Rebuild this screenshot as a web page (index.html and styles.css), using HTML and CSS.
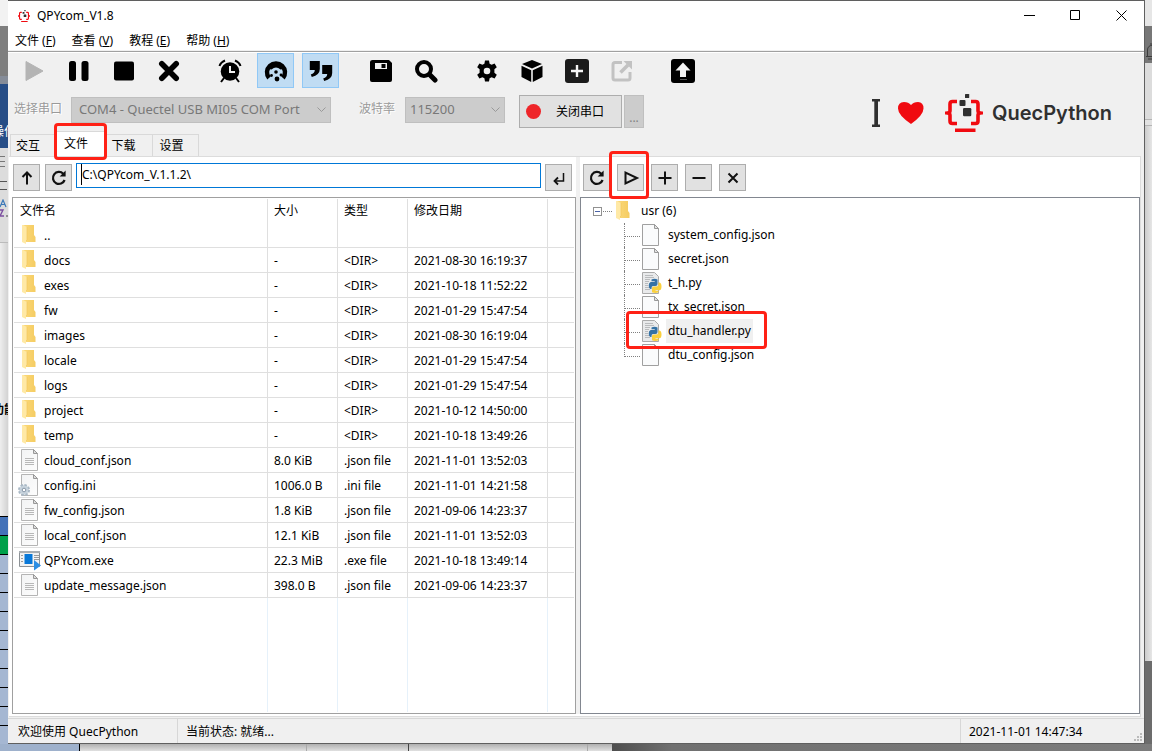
FILE: index.html
```html
<!DOCTYPE html>
<html lang="zh-CN">
<head>
<meta charset="utf-8">
<title>QPYcom_V1.8</title>
<link rel="stylesheet" href="styles.css">
</head>
<body>
<svg class="defs" width="0" height="0" aria-hidden="true">
  <defs>
    <linearGradient id="fold" x1="0" x2="1"><stop offset="0" stop-color="#fbd97a"/><stop offset="1" stop-color="#f5cc62"/></linearGradient>
    <linearGradient id="paper" x1="0" y1="0" x2="1" y2="1"><stop offset="0" stop-color="#f2f3f4"/><stop offset="1" stop-color="#fdfdfd"/></linearGradient>
    <symbol id="folder" viewBox="0 0 24 22"><path d="M5 1h11v10l1.500 2v5H6z" fill="url(#fold)"/><path d="M4 1h1l4 2v13l-1 1v3l-4-2z" fill="#ffe9a6"/><path d="M9 3v13l-1 1" fill="none" stroke="#f0c455" stroke-width=".6"/></symbol>
    <symbol id="doc" viewBox="0 0 24 22"><path d="M3.500.5h12l4 4v17h-16z" fill="url(#paper)" stroke="#b4b4b4"/><path d="M15.500.5v4h4z" fill="#ddd" stroke="#999"/><path d="M7 9.500h9M7 11.500h9M7 13.500h9M7 15.500h9" stroke="#b8b8b8"/></symbol>
    <symbol id="ini" viewBox="0 0 24 22"><path d="M3.500.5h12l4 4v17h-16z" fill="url(#paper)" stroke="#b4b4b4"/><path d="M15.500.5v4h4z" fill="#ddd" stroke="#999"/><circle cx="6" cy="16" r="5" fill="#d3dce4" stroke="#a9b8c5" stroke-width="2" stroke-dasharray="2.400 1.500"/><circle cx="6" cy="16" r="4.200" fill="#c6d2dc"/><circle cx="6" cy="16" r="1.800" fill="#fff" stroke="#8898a8"/></symbol>
    <symbol id="exe" viewBox="0 0 24 22"><path d="M1.500 2.500h20v15h-20z" fill="#ececec" stroke="#8d9296"/><path d="M1 2h21v2H1z" fill="#a9aeb2"/><path d="M2 4.500h19v12H2z" fill="#f3f3f3"/><path d="M3 6.500h2M3 9.500h2M3 12.500h2M16 6.500h5M16 8.500h5M16 10.500h5" stroke="#9b9b9b"/><path d="M6.500 5h8v10h-8z" fill="#0878d8"/><path d="M16 11l7 5.500-7 5z" fill="#2d8fe4"/></symbol>
    <symbol id="blank" viewBox="0 0 20 22"><path d="M.5.5h12l4 4v17H.5z" fill="#fafbfc" stroke="#a0a0a0"/><path d="M12.500.5v4h4z" fill="#e4e4e4" stroke="#999"/></symbol>
    <symbol id="py" viewBox="0 0 20 22"><path d="M.5.5h12l4 4v17H.5z" fill="#e9eaeb" stroke="#aaa"/><path d="M3 3.500h8M3 5.500h9M3 7.500h5M3 9.500h4M3 11.500h3M3 13.500h3M3 15.500h4M3 17.500h5" stroke="#b9bbbd"/><path d="M9.500 7.500q3-1.500 6 0V12q0 2-2 2h-2.500q-1.500 0-1.500 2v1H8.500q-1.800-.5-1.800-3.500t2-3.500h4v-.8H9.500z" fill="#3572a5"/><path d="M16.500 10.500h1q2 .5 2 4t-2 3.700h-4v.8h3v1.200q-3 1.600-6.500 0V16q0-1.500 1.800-1.500H14.500q2 0 2-2z" fill="#fad03d"/></symbol>
    <symbol id="refresh" viewBox="0 0 18 18"><path d="M14.600 11a6 6 0 1 1-1.400-6.300" fill="none" stroke="#111" stroke-width="2.200"/><path d="M15.600 1.600v6h-6z" fill="#111"/></symbol>
    <symbol id="brand" viewBox="0 0 38 38"><path d="M12 7.500H7.500Q5 7.500 5 10v6.500q0 2-1.500 2.500Q5 19.500 5 21.500V27q0 2.500 2.500 2.500H12M26 7.500h4.500Q33 7.500 33 10v6.500q0 2 1.500 2.500-1.500.5-1.500 2.500V27q0 2.500-2.500 2.500H26" fill="none" stroke="#f00a10" stroke-width="3.600"/><path d="M0 17.600h4v2.800H0zM34 17.600h4v2.800h-4zM10 34.600h20.500V38H10z" fill="#f00a10"/><rect x="20" y="0" width="4.200" height="4" rx=".6" fill="#303030"/><rect x="14.500" y="6" width="6" height="6" rx="1" fill="#303030"/><rect x="18" y="14" width="8.300" height="8.300" rx="1.200" fill="#303030"/></symbol>
  </defs>
</svg>
<div class="desktop">
  <aside class="edge-left" aria-hidden="true">
    <i class="l-top"></i><i class="l-gray"></i><i class="l-haze"></i><i class="l-blue">操作</i><i class="l-lines"></i><i class="l-sort"><svg width="8" height="20"><path d="M0 8L3 1l3 7M1 5.500h4" fill="none" stroke="#3b78b8" stroke-width="1.200"/><path d="M0 11h3l-3 6h4" fill="none" stroke="#7b4ea0" stroke-width="1.400"/><path d="M7 16v2" stroke="#444"/></svg></i><i class="l-page">功能</i><i class="l-cellblue"></i><i class="l-green"></i><i class="l-rows"></i>
  </aside>

  <main class="window">
    <header class="titlebar">
      <svg class="title-icon" viewBox="0 0 38 38"><use href="#brand"/></svg>
      <h1 class="title">QPYcom_V1.8</h1>
      <button class="win-btn" aria-label="最小化"><svg width="11" height="11"><path d="M0 5.500h11" stroke="#000"/></svg></button>
      <button class="win-btn" aria-label="最大化"><svg width="11" height="11"><path d="M.5.5h9v9h-9z" fill="none" stroke="#000"/></svg></button>
      <button class="win-btn" aria-label="关闭"><svg width="11" height="11"><path d="M.5.5l10 10M10.500.5l-10 10" stroke="#000"/></svg></button>
    </header>
    <nav class="menubar">
      <button class="menu">文件 (<u>F</u>)</button><button class="menu">查看 (<u>V</u>)</button><button class="menu">教程 (<u>E</u>)</button><button class="menu">帮助 (<u>H</u>)</button>
    </nav>

    <section class="tools">
      <div class="tools-main">
        <div class="toolbar">
          <div class="group">
            <button class="tool" aria-label="运行" disabled><svg viewBox="0 0 24 24"><path d="M4 2.500L21 12 4 21.500z" fill="#b4b4b4" stroke="#b4b4b4" stroke-linejoin="round"/></svg></button>
            <button class="tool" aria-label="暂停"><svg viewBox="0 0 24 24"><rect x="2" y="2" width="7" height="20" rx="2.500"/><rect x="14.500" y="2" width="7" height="20" rx="2.500"/></svg></button>
            <button class="tool" aria-label="停止"><svg viewBox="0 0 24 24"><rect x="2" y="2.500" width="20" height="19" rx="2"/></svg></button>
            <button class="tool" aria-label="清除"><svg viewBox="0 0 24 24"><path d="M4.800 4.800l14.400 14.400M19.200 4.800L4.800 19.200" stroke="#000" stroke-width="5.600" stroke-linecap="round"/></svg></button>
          </div>
          <div class="group">
            <button class="tool" aria-label="定时"><svg viewBox="0 0 24 24"><circle cx="12" cy="12.500" r="9.300"/><path d="M12 7v6h5" fill="none" stroke="#f0f0f0" stroke-width="2"/><path d="M1.500 7q1-3.500 5.500-5.500M22.500 7q-1-3.500-5.500-5.500M6 19l-3 4M18 19l3 4" fill="none" stroke="#000" stroke-width="2"/></svg></button>
            <button class="tool on" aria-label="日志" aria-pressed="true"><svg viewBox="0 0 24 24"><path d="M5 19A9 9 0 1 1 19 19" fill="none" stroke="#000" stroke-width="4.400"/><path d="M3.500 10Q12 1 20.500 10l-4 .5Q12 6.500 7.500 10.500z"/><circle cx="12" cy="13" r="1.800"/><circle cx="13" cy="20" r="2.400"/><circle cx="7.500" cy="16.500" r="1.400"/><circle cx="17" cy="16" r="1.400"/></svg></button>
            <button class="tool on" aria-label="引用" aria-pressed="true"><svg viewBox="0 0 24 24"><path d="M.8 2h10v8q0 6-8 8l-1-2.500q4-1.500 4-4.500H.8zM13.200 6h10v8q0 6-8 8l-1-2.500q4-1.500 4-4.500h-5z"/></svg></button>
          </div>
          <div class="group">
            <button class="tool" aria-label="保存"><svg viewBox="0 0 24 24"><path d="M3.500 1H20l3 3v17q0 2-2 2H3q-2 0-2-2V3q0-2 2.500-2z"/><path d="M6 4h12v6H6z" fill="#f0f0f0"/><path d="M12.500 5h4v4h-4z"/></svg></button>
            <button class="tool" aria-label="搜索"><svg viewBox="0 0 24 24"><circle cx="10" cy="10" r="7" fill="none" stroke="#000" stroke-width="4"/><path d="M16 16l5 5" stroke="#000" stroke-width="5" stroke-linecap="round"/></svg></button>
          </div>
          <div class="group">
            <button class="tool" aria-label="设置"><svg viewBox="0 0 24 24"><path d="M10 1.500h4l.6 3.200 2 1.100 3-1.200 2.200 3.700-2.400 2v3.400l2.400 2-2.200 3.700-3-1.200-2 1.100-.6 3.200h-4l-.6-3.200-2-1.100-3 1.200-2.200-3.700 2.400-2v-3.400l-2.400-2 2.200-3.700 3 1.200 2-1.100z"/><circle cx="12" cy="12" r="3.300" fill="#f0f0f0"/></svg></button>
            <button class="tool" aria-label="打包"><svg viewBox="0 0 24 24"><path d="M12 1l10 4-10 4.500L2 5zM1.500 6.800l9.700 4.400V23L1.500 18zM22.500 6.800l-9.700 4.400V23l9.700-5z"/></svg></button>
            <button class="tool" aria-label="新建"><svg viewBox="0 0 24 24"><rect width="24" height="24" rx="3" fill="#1b1b1b"/><path d="M12 6v12M6 12h12" stroke="#f4f4f4" stroke-width="2.400"/></svg></button>
            <button class="tool" aria-label="导出" disabled><svg viewBox="0 0 24 24"><path d="M12 3.500H5q-2 0-2 2V19q0 2 2 2h13q2 0 2-2v-6" fill="none" stroke="#c2c2c2" stroke-width="3"/><path d="M10.500 13.500L18 6" stroke="#c2c2c2" stroke-width="3.500"/><path d="M13.500 2H22v8.500z" fill="#c2c2c2"/></svg></button>
          </div>
          <div class="group">
            <button class="tool" aria-label="上传"><svg viewBox="0 0 24 24"><rect width="24" height="24" rx="3"/><path d="M12 3.500l7.500 8H15V18H9v-6.500H4.500z" fill="#f4f4f4"/><path d="M9 20.500h7" stroke="#555"/></svg></button>
          </div>
        </div>
        <div class="serial">
          <label class="serial-label" for="port">选择串口</label>
          <span class="combo combo-port"><select id="port" disabled><option>COM4 - Quectel USB MI05 COM Port</option></select><svg width="9" height="6"><path d="M.5.5l4 4 4-4" fill="none" stroke="#999"/></svg></span>
          <label class="serial-label baud-label" for="baud">波特率</label>
          <span class="combo combo-baud"><select id="baud" disabled><option>115200</option></select><svg width="9" height="6"><path d="M.5.5l4 4 4-4" fill="none" stroke="#999"/></svg></span>
          <button class="close-port"><i class="dot"></i><span>关闭串口</span></button>
          <button class="more" disabled>...</button>
        </div>
        <div class="tabs" role="tablist">
          <button class="tab" role="tab">交互</button><button class="tab active marked" role="tab" aria-selected="true">文件</button><button class="tab" role="tab">下载</button><button class="tab" role="tab">设置</button>
        </div>
      </div>
      <div class="brand">
        <svg width="52" height="28" viewBox="0 0 52 28"><path d="M0 0h8v2.500H6v23h2V28H0v-2.500h2.300v-23H0z" fill="#303030"/><path d="M39 25Q26 16 26 9.500 26 3 32 3q4.500 0 7 3 2.500-3 7-3 5.500 0 5.500 6.500T39 25z" fill="#f00a10"/></svg>
        <svg class="brand-mark" viewBox="0 0 38 38"><use href="#brand"/></svg>
        <span class="brand-name">QuecPython</span>
      </div>
    </section>

    <div class="panes">
      <section class="pane local">
        <div class="pane-bar">
          <button class="small" aria-label="上级目录"><svg viewBox="0 0 18 18"><path d="M9 15.500V4M4.500 8L9 3.500 13.500 8" fill="none" stroke="#111" stroke-width="2"/></svg></button>
          <button class="small" aria-label="刷新"><svg viewBox="0 0 18 18"><use href="#refresh"/></svg></button>
          <span class="path-box"><input class="path" type="text" value="C:\QPYcom_V.1.1.2\" aria-label="路径"></span>
          <button class="small" aria-label="转到"><svg viewBox="0 0 18 18"><path d="M13.500 4v8H5" fill="none" stroke="#111" stroke-width="1.500"/><path d="M8 8.500L4.500 12 8 15.500" fill="none" stroke="#111" stroke-width="1.800"/></svg></button>
        </div>
        <div class="list">
          <table class="files">
            <colgroup><col class="c-name"><col class="c-size"><col class="c-type"><col class="c-date"><col></colgroup>
            <thead><tr><th>文件名</th><th>大小</th><th>类型</th><th>修改日期</th><th></th></tr></thead>
            <tbody>
              <tr><td><svg><use href="#folder"/></svg>..</td><td></td><td></td><td></td><td></td></tr>
              <tr><td><svg><use href="#folder"/></svg>docs</td><td>-</td><td>&lt;DIR&gt;</td><td>2021-08-30 16:19:37</td><td></td></tr>
              <tr><td><svg><use href="#folder"/></svg>exes</td><td>-</td><td>&lt;DIR&gt;</td><td>2021-10-18 11:52:22</td><td></td></tr>
              <tr><td><svg><use href="#folder"/></svg>fw</td><td>-</td><td>&lt;DIR&gt;</td><td>2021-01-29 15:47:54</td><td></td></tr>
              <tr><td><svg><use href="#folder"/></svg>images</td><td>-</td><td>&lt;DIR&gt;</td><td>2021-08-30 16:19:04</td><td></td></tr>
              <tr><td><svg><use href="#folder"/></svg>locale</td><td>-</td><td>&lt;DIR&gt;</td><td>2021-01-29 15:47:54</td><td></td></tr>
              <tr><td><svg><use href="#folder"/></svg>logs</td><td>-</td><td>&lt;DIR&gt;</td><td>2021-01-29 15:47:54</td><td></td></tr>
              <tr><td><svg><use href="#folder"/></svg>project</td><td>-</td><td>&lt;DIR&gt;</td><td>2021-10-12 14:50:00</td><td></td></tr>
              <tr><td><svg><use href="#folder"/></svg>temp</td><td>-</td><td>&lt;DIR&gt;</td><td>2021-10-18 13:49:26</td><td></td></tr>
              <tr><td><svg><use href="#doc"/></svg>cloud_conf.json</td><td>8.0 KiB</td><td>.json file</td><td>2021-11-01 13:52:03</td><td></td></tr>
              <tr><td><svg><use href="#ini"/></svg>config.ini</td><td>1006.0 B</td><td>.ini file</td><td>2021-11-01 14:21:58</td><td></td></tr>
              <tr><td><svg><use href="#doc"/></svg>fw_config.json</td><td>1.8 KiB</td><td>.json file</td><td>2021-09-06 14:23:37</td><td></td></tr>
              <tr><td><svg><use href="#doc"/></svg>local_conf.json</td><td>12.1 KiB</td><td>.json file</td><td>2021-11-01 13:52:03</td><td></td></tr>
              <tr><td><svg><use href="#exe"/></svg>QPYcom.exe</td><td>22.3 MiB</td><td>.exe file</td><td>2021-10-18 13:49:14</td><td></td></tr>
              <tr><td><svg><use href="#doc"/></svg>update_message.json</td><td>398.0 B</td><td>.json file</td><td>2021-09-06 14:23:37</td><td></td></tr>
              <tr class="filler"><td></td><td></td><td></td><td></td><td></td></tr>
            </tbody>
          </table>
        </div>
      </section>

      <section class="pane remote">
        <div class="pane-bar">
          <button class="small" aria-label="刷新设备"><svg viewBox="0 0 18 18"><use href="#refresh"/></svg></button>
          <button class="small marked" aria-label="运行脚本"><svg viewBox="0 0 18 18"><path d="M3.500 3.500v11L15 9z" fill="none" stroke="#111" stroke-width="2"/></svg></button>
          <button class="small" aria-label="添加"><svg viewBox="0 0 18 18"><path d="M9 2.500v13M2.500 9h13" stroke="#111" stroke-width="2"/></svg></button>
          <button class="small" aria-label="移除"><svg viewBox="0 0 18 18"><path d="M2.500 9h13" stroke="#111" stroke-width="2"/></svg></button>
          <button class="small" aria-label="删除"><svg viewBox="0 0 18 18"><path d="M4.500 4.500l9 9M13.500 4.500l-9 9" stroke="#111" stroke-width="2"/></svg></button>
        </div>
        <div class="tree">
          <div class="root"><button class="expander" aria-label="折叠"></button><i class="dots"></i><svg class="root-icon" viewBox="0 0 24 22"><use href="#folder"/></svg><span>usr (6)</span></div>
          <ul class="nodes">
            <li><svg><use href="#blank"/></svg><span>system_config.json</span></li>
            <li><svg><use href="#blank"/></svg><span>secret.json</span></li>
            <li><svg><use href="#py"/></svg><span>t_h.py</span></li>
            <li><svg><use href="#blank"/></svg><span>tx_secret.json</span></li>
            <li class="selected marked"><svg><use href="#py"/></svg><span>dtu_handler.py</span></li>
            <li><svg><use href="#blank"/></svg><span>dtu_config.json</span></li>
          </ul>
        </div>
      </section>
    </div>

    <footer class="status">
      <span class="s-welcome">欢迎使用 QuecPython</span><span class="s-state">当前状态: 就绪...</span><time class="s-time">2021-11-01 14:47:34</time>
      <svg class="grip" width="8" height="8"><path d="M6 0h2v2H6zM3 3h2v2H3zM6 3h2v2H6zM0 6h2v2H0zM3 6h2v2H3zM6 6h2v2H6z" fill="#bbb"/></svg>
    </footer>
  </main>

  <aside class="edge-right" aria-hidden="true">
    <i class="r-top"></i><i class="r-gray"><svg width="8" height="18"><path d="M1 14.500h7M2.500 14V8q0-4.500 5.500-5M6 1v2M3 17h5" fill="none" stroke="#3c3c3c"/></svg></i><i class="r-line"></i><i class="r-gap"></i><i class="r-page"></i><i class="r-dark"></i>
  </aside>
  <div class="edge-bottom" aria-hidden="true"><i class="b-blue"></i><i class="b-first"></i><i class="b-second"></i><i class="b-third"></i><i class="b-fourth"></i><i class="b-dark"></i></div>
</div>
</body>
</html>
```

FILE: styles.css
```css
* { box-sizing: border-box; }
body {
  margin: 0;
  font: 12px/16px "Noto Sans", "Noto Sans CJK SC", sans-serif;
  color: #000;
}
button, input, select { font: inherit; color: inherit; margin: 0; padding: 0; border: 0; border-radius: 0; background: none; }
i { font-style: normal; display: block; }
svg { display: block; flex: none; }
.defs { position: absolute; }

/* Desktop behind the window */
.desktop {
  display: grid;
  grid-template: minmax(0, 1fr) 7px / 8px minmax(0, 1fr) 7px;
  height: 100vh;
  overflow: hidden;
}
.edge-left, .edge-right { display: flex; flex-direction: column; overflow: hidden; }
.edge-left i, .edge-right i { flex: none; overflow: hidden; }
.l-top { height: 26px; background: #f2f2f2; }
.l-gray { height: 50px; background: #7e7e7e; }
.l-haze { height: 8px; background: #858c98; }
.l-blue { height: 64px; padding-top: 40px; background: #264d86; color: #fff; text-indent: -8px; white-space: nowrap; }
.l-lines {
  height: 48px;
  background:
    linear-gradient(#777, #777) 0 8px / 5px 1px no-repeat,
    linear-gradient(#777, #777) 0 13px / 5px 1px no-repeat,
    linear-gradient(#777, #777) 0 18px / 5px 1px no-repeat,
    linear-gradient(#555, #555) 0 33px / 7px 1px no-repeat,
    linear-gradient(#555, #555) 0 41px / 7px 1px no-repeat,
    #dcdcdc;
}
.l-sort { height: 47px; padding-top: 3px; border-bottom: 1px solid #bbb; background: #dcdcdc; }
.l-page { height: 273px; padding-top: 159px; background: linear-gradient(90deg, #eee, #d2d2d2); text-indent: -8px; white-space: nowrap; font-weight: 700; }
.l-cellblue { height: 20px; background: #4472b8; border-top: 1px solid #000; border-bottom: 1px solid #000; }
.l-green { height: 19px; background: #00a04a; border-bottom: 1px solid #000; }
.edge-left .l-rows { flex: 1; background: repeating-linear-gradient(#a5b7d2 0 18px, #000 18px 19px); }
.r-top { height: 26px; background: #e6e6e6; }
.r-gray { height: 37px; padding-top: 16px; background: #777; }
.r-line { height: 57px; background: #dcdcdc; border-bottom: 1px solid #b5b5b5; }
.r-gap { height: 6px; background: #e2e2e2; border-bottom: 1px solid #b5b5b5; }
.edge-right .r-page { flex: 1; background: linear-gradient(90deg, #ccc, #e6e6e6); }
.r-dark { height: 83px; background: #6c6c6c; }
.edge-bottom { grid-column: 1 / -1; display: flex; }
.edge-bottom i { flex: none; background: linear-gradient(#b0b0b0, #e0e0e0); }
.edge-bottom .b-blue { width: 80px; background: #9eb1cc; border-right: 1px solid #000; }
.b-first { width: 227px; border-right: 1px solid #aaa; }
.b-second { width: 102px; border-right: 1px solid #444; }
.b-third { width: 179px; border-right: 1px solid #aaa; }
.b-fourth { width: 24px; }
.edge-bottom .b-dark { flex: 1; background: linear-gradient(90deg, #4e4e4e, #707070 60px, #7c7c7c); }

/* Window frame */
.window { display: flex; flex-direction: column; min-width: 0; border: solid #5f5f5f; border-width: 1px 1px 1px 0; background: #f0f0f0; }
.titlebar { display: flex; align-items: center; height: 29px; background: #fff; }
.title-icon { width: 12px; height: 12px; margin: 0 7px 0 10px; }
.title { flex: 1; margin: 0; font-size: 12px; font-weight: 400; }
.win-btn { display: grid; place-items: center; width: 46px; height: 29px; }
.menubar { display: flex; gap: 16px; height: 20px; padding: 2px 0 0 7px; background: #fff; }
.menu { white-space: nowrap; }
.menu u { text-underline-offset: 1px; }

/* Toolbar area */
.tools { display: flex; justify-content: space-between; margin-top: 1px; border-top: 1px solid #a0a0a0; box-shadow: inset 0 1px #fff; }
.tools-main { padding-top: 1px; }
.toolbar { display: flex; gap: 24px; padding-left: 8px; }
.group { display: flex; gap: 8px; }
.tool { display: flex; align-items: center; padding-left: 6px; width: 37px; height: 35px; }
.tool svg { width: 24px; height: 24px; }
.tool.on { background: #c0dcf3; border: 1px solid #90c8f6; }
.serial { display: flex; align-items: flex-start; padding: 7px 0 0 6px; }
.serial-label { width: 57px; padding-top: 6px; color: #9a9a9a; text-shadow: 1px 1px #fff; white-space: nowrap; }
.baud-label { width: 46px; margin-left: 28px; }
.combo { display: flex; align-items: center; justify-content: space-between; height: 26px; margin-top: 2px; padding-right: 4px; border: 1px solid #bfbfbf; background: #ccc; }
.combo-port { width: 260px; }
.combo-baud { width: 100px; }
.combo select { flex: 1; height: 24px; padding: 0 0 2px 7px; appearance: none; color: #787878; opacity: 1; font-size: 13px; }
.combo-baud select { padding-left: 4px; }
.close-port { display: flex; align-items: center; gap: 15px; width: 103px; height: 33px; margin-left: 14px; padding-left: 6px; border: 1px solid #adadad; background: #e1e1e1; }
.dot { width: 15px; height: 15px; border-radius: 50%; background: #ee2529; }
.more { width: 20px; height: 33px; margin-left: 2px; padding-top: 12px; border: 1px solid #bfbfbf; background: #ccc; color: #838383; }
.brand { display: flex; align-items: center; margin-right: 30px; padding-top: 18px; }
.brand-mark { width: 38px; height: 38px; margin: 0 9px 0 21px; }
.brand-name { width: 122px; color: #303030; font: 600 20px/28px Inter, sans-serif; }

/* Tabs */
.tabs { display: flex; align-items: flex-end; height: 28px; padding-left: 2px; }
.tab { width: 46px; height: 22px; padding-right: 4px; border: 1px solid #d9d9d9; border-width: 1px 1px 0 0; text-align: center; }
.tab:first-child { border-left-width: 1px; padding-right: 10px; }
.tab.active { width: 51px; height: 25px; padding: 0 10px 1px 0; background: #fff; }
.tab:nth-child(3) { padding-right: 12px; }
.tab:last-child { padding-right: 8px; }
.marked { position: relative; }
.marked::after { content: ""; position: absolute; z-index: 2; border: 3px solid #ff2116; border-radius: 4px; pointer-events: none; }
.tab.marked::after { inset: -9px -1px -4px -2px; }
.small.marked::after { inset: -14px -6px -9px -9px; }
.tree .marked::after { inset: -8px auto -6px 1px; width: 135px; }

/* Two panes */
.panes { flex: 1; display: flex; min-height: 0; margin: 0 3px 1px 1px; padding-bottom: 2px; border: 1px solid #dcdcdc; border-left: 0; background: #fff; }
.pane { display: flex; flex-direction: column; min-height: 0; }
.local { width: 567px; padding-left: 3px; }
.remote { flex: 1; min-width: 0; margin-left: 4px; box-shadow: -4px 0 #f0f0f0; }
.pane-bar { display: flex; height: 40px; padding: 7px 4px 0 1px; gap: 5px; }
.remote .pane-bar { padding-left: 3px; gap: 7px; }
.small { flex: none; display: grid; place-items: center; width: 27px; height: 27px; border: 1px solid #adadad; background: #e1e1e1; }
.small svg { width: 18px; height: 18px; }
.path-box { flex: 1; display: flex; height: 25px; margin: -1px -1px 0; border: 1px solid #0078d7; }
.path { flex: 1; min-width: 0; height: 21px; margin-left: 4px; border-left: 1px solid #000; outline: 0; }
.list, .tree { flex: 1; min-height: 0; border: 1px solid #a0a0a0; }
.files { width: 100%; height: 100%; table-layout: fixed; border-collapse: separate; border-spacing: 0; padding: 1px; }
.c-name { width: 254px; }
.c-size, .c-type { width: 70px; }
.c-date { width: 140px; }
.files th, .files td { height: 25px; padding: 2px 0 0 6px; border: solid #dfdfdf; border-width: 0 1px 1px 0; text-align: left; font-weight: 400; white-space: nowrap; }
.files th { height: 24px; padding-top: 0; border-bottom: 0; }
.files td:first-child { padding-left: 4px; }
.files th:last-child, .files td:last-child { border-right: 0; }
.files td svg { float: left; width: 24px; height: 22px; margin: -4px 2px -2px 0; }
.files .filler td { height: auto; border-color: #e6f1fa; border-bottom: 0; }
.tree { padding-top: 1px; border-color: #828790; }
.root { display: flex; align-items: center; height: 24px; padding-left: 12px; }
.expander { width: 9px; height: 9px; border: 1px solid #919191; background: linear-gradient(#4b63a7, #4b63a7) center / 5px 1px no-repeat #fff; }
.dots { width: 9px; margin-left: 1px; border-top: 1px dotted #808080; }
.root-icon { width: 24px; height: 22px; margin: 0 5px 0 0; }
.nodes { margin: 0; padding: 0 0 0 43px; list-style: none; }
.nodes li { position: relative; display: flex; align-items: center; height: 24px; padding-left: 18px; }
.nodes li::before { content: ""; position: absolute; left: 0; top: 0; width: 15px; height: 13px; border: dotted #808080; border-width: 0 0 1px 1px; }
.nodes li:not(:last-child) { border-left: 1px dotted #808080; padding-left: 17px; }
.nodes li:not(:last-child)::before { border-left: 0; }
.nodes svg { width: 20px; height: 22px; }
.nodes span { margin-left: 4px; padding: 4px 2px; }
.nodes .selected span { background: #f0f0f0; }

/* Status bar */
.status { display: flex; align-items: center; height: 25px; border-top: 1px solid #d7d7d7; position: relative; white-space: nowrap; }
.status span, .status time { padding: 4px 0 2px 8px; line-height: 18px; }
.status .s-welcome { width: 170px; padding-left: 10px; border-right: 1px solid #d7d7d7; }
.s-state { flex: 1; border-right: 1px solid #d7d7d7; }
.s-time { width: 183px; }
.grip { position: absolute; right: 2px; bottom: 2px; }
```
